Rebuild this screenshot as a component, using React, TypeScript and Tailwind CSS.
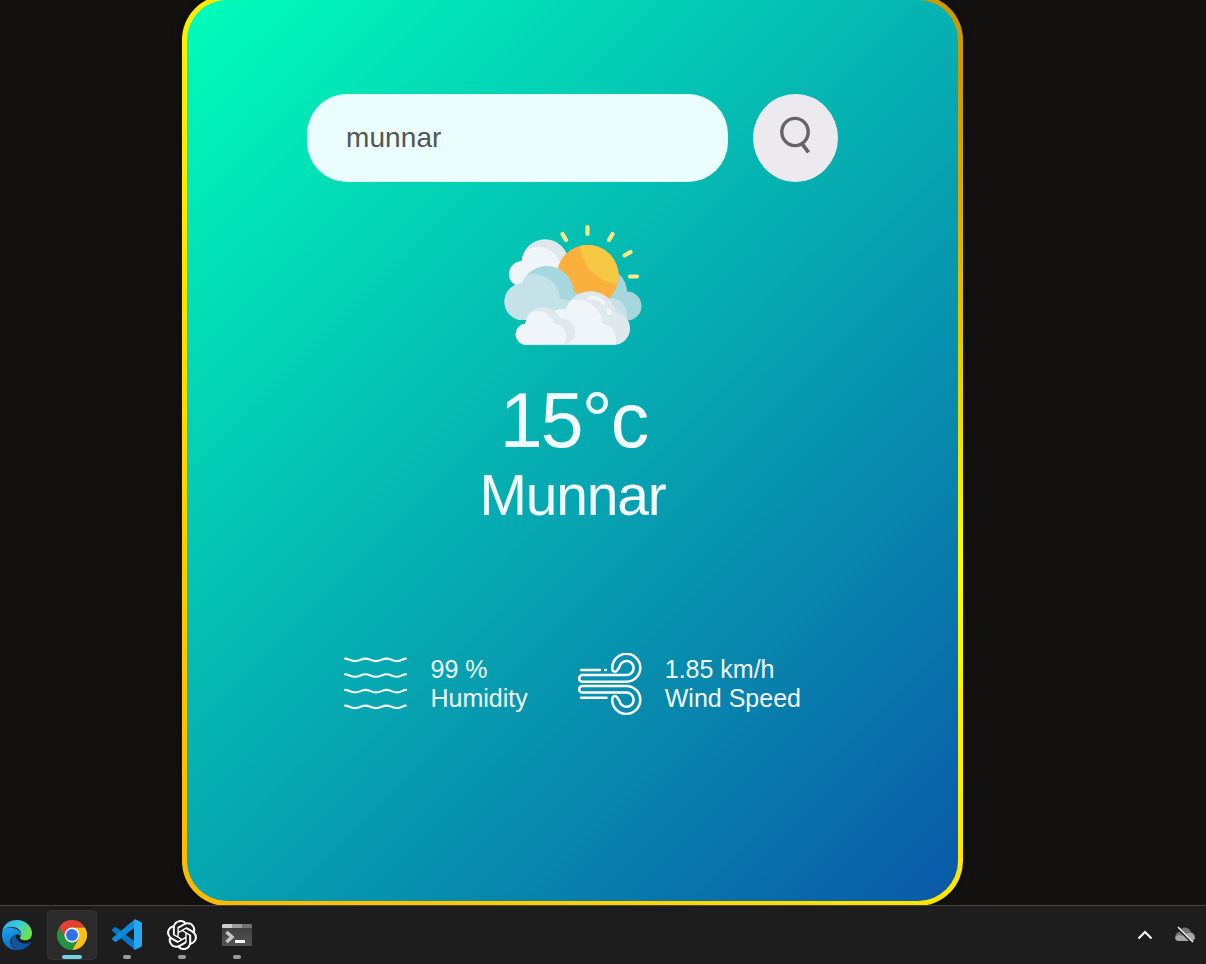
import React from "react";
import { SiOpenai } from "react-icons/si";

function SearchIcon() {
  return (
    <svg width="34" height="38" viewBox="0 0 34 38" fill="none" stroke="#656365" strokeWidth="3.4">
      <ellipse cx="16" cy="16" rx="13.2" ry="13.6" />
      <path d="M23.2 27.8 29.500 36.3" strokeWidth="3.7" />
    </svg>
  );
}

function WeatherIcon() {
  return (
    <svg width="138" height="122" viewBox="504 224 138 122" className="block">
      <defs>
        <clipPath id="sun"><circle cx="587.700" cy="276" r="31" /></clipPath>
        <clipPath id="back"><circle cx="545" cy="262.500" r="23.300" /><circle cx="521.500" cy="274" r="12.500" /></clipPath>
        <clipPath id="blue"><circle cx="547" cy="292.500" r="26.500" /><circle cx="522.700" cy="301.800" r="18.300" /><circle cx="568" cy="306" r="16" /><rect x="523" y="290" width="50" height="30" /></clipPath>
        <clipPath id="front"><circle cx="590.500" cy="317" r="25.800" /><circle cx="562" cy="322" r="13" /><circle cx="613.500" cy="328.500" r="16.500" /><rect x="550" y="322" width="64" height="23" /></clipPath>
        <clipPath id="small"><circle cx="543.500" cy="325" r="18" /><circle cx="526.300" cy="334.300" r="10.700" /><circle cx="562" cy="331.700" r="13.300" /><rect x="526" y="325" width="38" height="20" /></clipPath>
        <clipPath id="right"><circle cx="603" cy="292" r="24" /><circle cx="627" cy="306" r="14.500" /><rect x="600" y="295" width="27" height="25.500" /></clipPath>
      </defs>
      <g clipPath="url(#back)">
        <path d="M500 230H575V300H500Z" fill="#dfe9ed" />
        <circle cx="538" cy="270" r="23" fill="#f0f5f9" />
        <circle cx="519" cy="274" r="14" fill="#f0f5f9" />
        <path d="M520 272H561V300H520Z" fill="#f0f5f9" />
      </g>
      <g clipPath="url(#right)">
        <path d="M590 260H645V325H590Z" fill="#a6d6de" />
        <circle cx="610" cy="315" r="17" fill="#c5e2e8" />
      </g>
      <g clipPath="url(#sun)">
        <path d="M556 244H620V308H556Z" fill="#fbb03e" />
        <circle cx="620" cy="243.500" r="40" fill="#f5c944" />
      </g>
      <path d="M587.500 227V234M562.500 234 566 240M612.500 234 609 240M624.500 255.500 630.500 252M630 276.500H637" stroke="#f8eb89" strokeWidth="4.200" strokeLinecap="round" />
      <g clipPath="url(#blue)">
        <path d="M500 260H590V325H500Z" fill="#a6d6de" />
        <circle cx="534.500" cy="299.500" r="25.500" fill="#c5e2e8" />
        <circle cx="562" cy="315" r="16" fill="#c5e2e8" />
        <circle cx="517" cy="304" r="20" fill="#c5e2e8" />
        <rect x="515" y="303" width="45" height="20" fill="#c5e2e8" />
      </g>
      <g clipPath="url(#front)">
        <path d="M540 285H635V346H540Z" fill="#dfe9ed" />
        <circle cx="577" cy="325" r="25.500" fill="#f0f5f9" />
        <circle cx="600" cy="339" r="16" fill="#f0f5f9" />
        <circle cx="561" cy="323" r="14" fill="#f0f5f9" />
        <path d="M545 339H616V346H545Z" fill="#f0f5f9" />
      </g>
      <path d="M590 297.500Q599 297.500 604 303M608.500 310 609.500 313" fill="none" stroke="#f0f5f9" strokeWidth="4" strokeLinecap="round" />
      <g clipPath="url(#small)">
        <path d="M510 303H580V346H510Z" fill="#dfe9ed" />
        <circle cx="537.500" cy="328" r="17" fill="#f0f5f9" />
        <circle cx="553" cy="337" r="13.500" fill="#f0f5f9" />
        <path d="M510 322H540V346H510Z" fill="#f0f5f9" />
      </g>
      <path d="M526 344.600H615" stroke="#c8dce2" strokeWidth=".7" />
    </svg>
  );
}

function HumidityIcon() {
  return (
    <svg width="64" height="56" viewBox="0 0 64 56" fill="none" stroke="#f4fbfc" strokeWidth="2.1" strokeLinecap="round">
      {[3.6, 19.3, 34.9, 50.6].map((y) => (
        <path key={y} transform={`translate(0 ${y})`} d="M1 -1C5 -1 6 1.500 11 1.500S17 -1 21.500 -1 27 1.500 32 1.500 38 -1 42.500 -1 48 1.500 53 1.500 58 -1 62 -1" />
      ))}
    </svg>
  );
}

function WindIcon() {
  return (
    <svg width="64" height="62" viewBox="0 0 64 62" fill="none" stroke="#fff" strokeWidth="2.5" strokeLinecap="round" strokeLinejoin="round">
      <path d="M3 17H22M27.300 17H27.700" />
      <path d="M39 17.500A2.600 2.600 0 0 1 34.300 16.500V15.500A14 14 0 1 1 48.500 28.800H4.500A3.300 3.300 0 0 1 4.500 22.100H48.500A7.100 7.100 0 1 0 41.500 14Q40.500 15.200 39 17.500" />
      <path d="M3 44.700H28.500" />
      <path d="M39 44.200A2.600 2.600 0 0 0 34.300 45.200V46.200A14 14 0 1 0 48.500 32.900H4.500A3.300 3.300 0 0 0 4.500 39.600H48.500A7.100 7.100 0 1 1 41.500 47.700Q40.500 46.500 39 44.200" />
    </svg>
  );
}

function EdgeIcon() {
  return (
    <svg width="32" height="32" viewBox="0 0 32 32">
      <defs>
        <linearGradient id="edgeTop" x1="0" y1="0" x2="1" y2=".5">
          <stop stopColor="#2da7ed" /><stop offset=".5" stopColor="#38c8df" /><stop offset="1" stopColor="#6ce44d" />
        </linearGradient>
        <linearGradient id="edgeLeft" x1="0" y1="0" x2=".4" y2="1">
          <stop stopColor="#1da7ee" /><stop offset="1" stopColor="#0968c4" />
        </linearGradient>
      </defs>
      <path d="M1 14C2 5 8 1 16 1C25 1 31 8 31 14C31 20 27 22 22 21C19 20 18 19 20 17C21 11 16 8 11 8C6 8 2 10 1 14Z" fill="url(#edgeTop)" />
      <path d="M13 14C8 20 10 29 17 31C23 31 27 28 30 24C30 23 29 23 28 24C21 26 14 22 15 16Z" fill="#10559f" />
      <path d="M1 16C1 9 7 8 12 9C17 10 21 13 20 17C15 13 8 17 9.500 24C10.500 28 13 30 17 31C8 32 1 25 1 16Z" fill="url(#edgeLeft)" />
    </svg>
  );
}

function ChromeIcon() {
  return (
    <svg width="30" height="30" viewBox="0 0 30 30">
      <path d="M2 7.500A15 15 0 0 1 28 7.500H15L8.500 18.700Z" fill="#e34133" />
      <path d="M28 7.500A15 15 0 0 1 15 30L21.500 18.700 15 7.500Z" fill="#fbc116" />
      <path d="M2 7.500A15 15 0 0 0 15 30L21.500 18.700H8.500Z" fill="#229342" />
      <circle cx="15" cy="15" r="7.500" fill="#fff" />
      <circle cx="15" cy="15" r="6" fill="#2e73e8" />
    </svg>
  );
}

function CodeIcon() {
  return (
    <svg width="30" height="31" viewBox="0 0 30 31">
      <path d="M0 10.500 2.500 8.200Q3.500 7.700 4.500 8.500L24 23.500V30.500H22.500L1 12.500Q-.5 11.500 0 10.500Z" fill="#0779c4" />
      <path d="M0 20.500Q-.5 19.500 1 18.500L22.500.5H24V7.500L4.500 22.500Q3.500 23.300 2.500 22.500Z" fill="#0b8ddb" />
      <path d="M22 1Q22.600 0 24 .8L29 3Q30 3.500 30 5V26Q30 27.500 29 28L24 30.300Q22.600 31 22 30Z" fill="#27a7f2" />
    </svg>
  );
}

function TerminalIcon() {
  return (
    <svg width="30" height="22" viewBox="0 0 30 22">
      <defs>
        <linearGradient id="term" x1="0" y1="0" x2="0" y2="1"><stop stopColor="#3c3c3c" /><stop offset="1" stopColor="#535353" /></linearGradient>
      </defs>
      <rect width="30" height="22" rx="1" fill="url(#term)" />
      <path d="M1 0H10V4H0V1Z" fill="#cccccc" /><path d="M10 0H20V4H10Z" fill="#9c9c9c" /><path d="M20 0H29L30 1V4H20Z" fill="#727272" />
      <path d="M4.500 8 10 13 4.500 18" fill="none" stroke="#c7c7c7" strokeWidth="3.500" />
      <path d="M13 17.500H23" stroke="#fff" strokeWidth="3" />
    </svg>
  );
}

function TaskItem({ children, active = false, running = true }: { children: React.ReactNode; active?: boolean; running?: boolean }) {
  return (
    <div className={`flex h-[50px] w-[50px] flex-col items-center justify-between rounded-[5px] ${active ? "bg-[#2b2b2b] ring-1 ring-inset ring-[#353535]" : ""}`}>
      <div className="flex h-[50px] items-center justify-center">{children}</div>
      {running && <div className={active ? "-mt-1 mb-px h-1 w-5 shrink-0 rounded-full bg-[#72d1dc]" : "-mt-1 mb-px h-1 w-2 shrink-0 rounded-full bg-[#9b9b9b]"} />}
    </div>
  );
}

function Taskbar() {
  return (
    <footer className="flex h-[59px] shrink-0 items-start justify-between border-t border-[#484644] bg-[#1d1d1d] pt-1">
      <div className="-ml-2 flex gap-[5px]">
        <TaskItem running={false}><EdgeIcon /></TaskItem>
        <TaskItem active><ChromeIcon /></TaskItem>
        <TaskItem><CodeIcon /></TaskItem>
        <TaskItem><SiOpenai className="h-[30px] w-[30px] text-white" /></TaskItem>
        <TaskItem><TerminalIcon /></TaskItem>
      </div>
      <div className="flex h-[50px] items-center gap-[21px] pr-2.5">
        <svg width="16" height="10" viewBox="0 0 16 10" fill="none" stroke="#fff" strokeWidth="2"><path d="M1.500 8.500 8 2 14.500 8.500" /></svg>
        <svg width="22" height="18" viewBox="0 0 22 18">
          <path d="M5 15C0 15 0 7 5 6C7 0 15 0 17 6C22 7 22 15 17 15Z" fill="#737373" />
          <path d="M5 15C1 15 0 11 3 10Q5 8 8 10L12 8Q16 5 20 9C22 13 20 15 17 15Z" fill="#a7a7a7" />
          <path d="M3 1 19 17" stroke="#1d1d1d" strokeWidth="3" /><path d="M4 1 19 16" stroke="#fff" strokeWidth="1.500" />
        </svg>
      </div>
    </footer>
  );
}

export default function App() {
  return (
    <div className="flex h-[964px] w-[1206px] flex-col overflow-hidden bg-[#131210] font-['Liberation_Sans',Arial,sans-serif]">
      <div className="h-[905px] shrink-0 overflow-hidden">
        <div className="-mt-[5px] ml-[182px] h-[911px] w-[781px] rounded-[45px] bg-[conic-gradient(#cc9900_0deg,#cc9900_45deg,#ffff00_106deg,#ffe600_140deg,#ffb800_221deg,#ffee00_319deg,#cc9900_360deg)] p-[5px] shadow-[0_0_12px_rgba(0,0,0,.45)]">
          <main className="flex h-full flex-col items-center rounded-[40px] bg-linear-[135deg,#00feba,#0b58a8] pt-[94px] text-[#f0faff]">
            <div className="flex gap-[25px]">
              <input aria-label="City" defaultValue="munnar" className="h-[88px] w-[421px] rounded-[40px] bg-[#eafffd] px-[39px] text-[28px] tracking-[.1px] text-[#555] outline-none" />
              <button aria-label="Search" className="flex h-[88px] w-[85px] items-center justify-center rounded-[50%] bg-[#edeaef] pb-1.5"><SearchIcon /></button>
            </div>
            <div className="mt-[42px]"><WeatherIcon /></div>
            <h1 className="mt-[31px] pl-0.5 text-[77px] leading-[86px] tracking-[-1.8px]">15°c</h1>
            <h2 className="text-[57px] leading-[64px] tracking-[-1.2px]">Munnar</h2>
            <section className="mt-[126px] flex h-[62px] w-[457px] gap-[50px] text-[25px] leading-[29px]">
              <div className="flex items-center gap-[22.5px]"><HumidityIcon /><div><p>99 %</p><p>Humidity</p></div></div>
              <div className="flex items-center gap-[23px]"><WindIcon /><div className="whitespace-nowrap"><p>1.85 km/h</p><p>Wind Speed</p></div></div>
            </section>
          </main>
        </div>
      </div>
      <Taskbar />
    </div>
  );
}
